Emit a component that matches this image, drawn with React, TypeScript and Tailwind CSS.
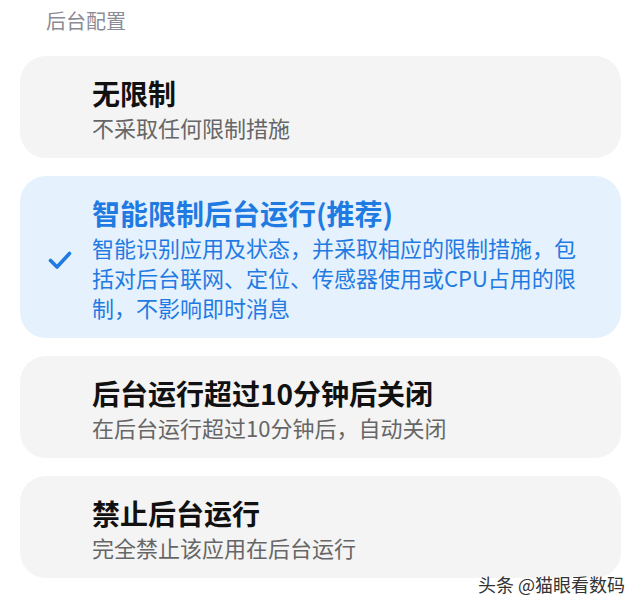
import React from "react";

type Option = {
  title: string;
  desc: React.ReactNode;
  selected?: boolean;
};

const options: Option[] = [
  { title: "无限制", desc: "不采取任何限制措施" },
  {
    title: "智能限制后台运行(推荐)",
    desc: (
      <>
        智能识别应用及状态，并采取相应的限制措施，包
        <br />
        括对后台联网、定位、传感器使用或CPU占用的限
        <br />
        制，不影响即时消息
      </>
    ),
    selected: true,
  },
  { title: "后台运行超过10分钟后关闭", desc: "在后台运行超过10分钟后，自动关闭" },
  { title: "禁止后台运行", desc: "完全禁止该应用在后台运行" },
];

function Check() {
  return (
    <svg width="26" height="22" viewBox="0 0 26 22" fill="none">
      <path
        d="M3.5 11.5l6.5 6.5L22.5 4.5"
        stroke="#1f7be2"
        strokeWidth="3.6"
        strokeLinecap="round"
        strokeLinejoin="round"
      />
    </svg>
  );
}

export default function App() {
  return (
    <div
      className="relative w-[640px] h-[601px] bg-white overflow-hidden"
      style={{ fontFamily: '"Noto Sans CJK SC", "Noto Sans", sans-serif' }}
    >
      <div className="pl-[46px] pt-[7px] h-[56px] text-[20px] leading-[28px] text-[#8b8b95]">
        后台配置
      </div>
      <div className="flex flex-col gap-[18px] px-[20px] pr-[19px]">
        {options.map((o, i) => (
          <div
            key={i}
            className={`flex items-center rounded-[26px] pt-[19px] pb-[16px] ${
              o.selected ? "bg-[#e5f1fd]" : "bg-[#f4f4f4]"
            }`}
          >
            <div className="w-[72px] flex justify-center pl-[8px] pt-[2px]">
              {o.selected && <Check />}
            </div>
            <div className="flex flex-col">
              <div
                className={`text-[28px] leading-[37px] font-bold ${
                  o.selected ? "text-[#1f7be2]" : "text-[#111111]"
                }`}
              >
                {o.title}
              </div>
              <div
                className={`text-[22px] leading-[30px] ${
                  o.selected ? "text-[#1f7be2]" : "text-[#666666]"
                }`}
              >
                {o.desc}
              </div>
            </div>
          </div>
        ))}
      </div>
      <div
        className="absolute right-[15px] bottom-[7px] text-[18px] leading-[20px] text-[#333333]"
        style={{ textShadow: "0 0 2px #fff, 0 0 2px #fff" }}
      >
        头条 @猫眼看数码
      </div>
    </div>
  );
}
